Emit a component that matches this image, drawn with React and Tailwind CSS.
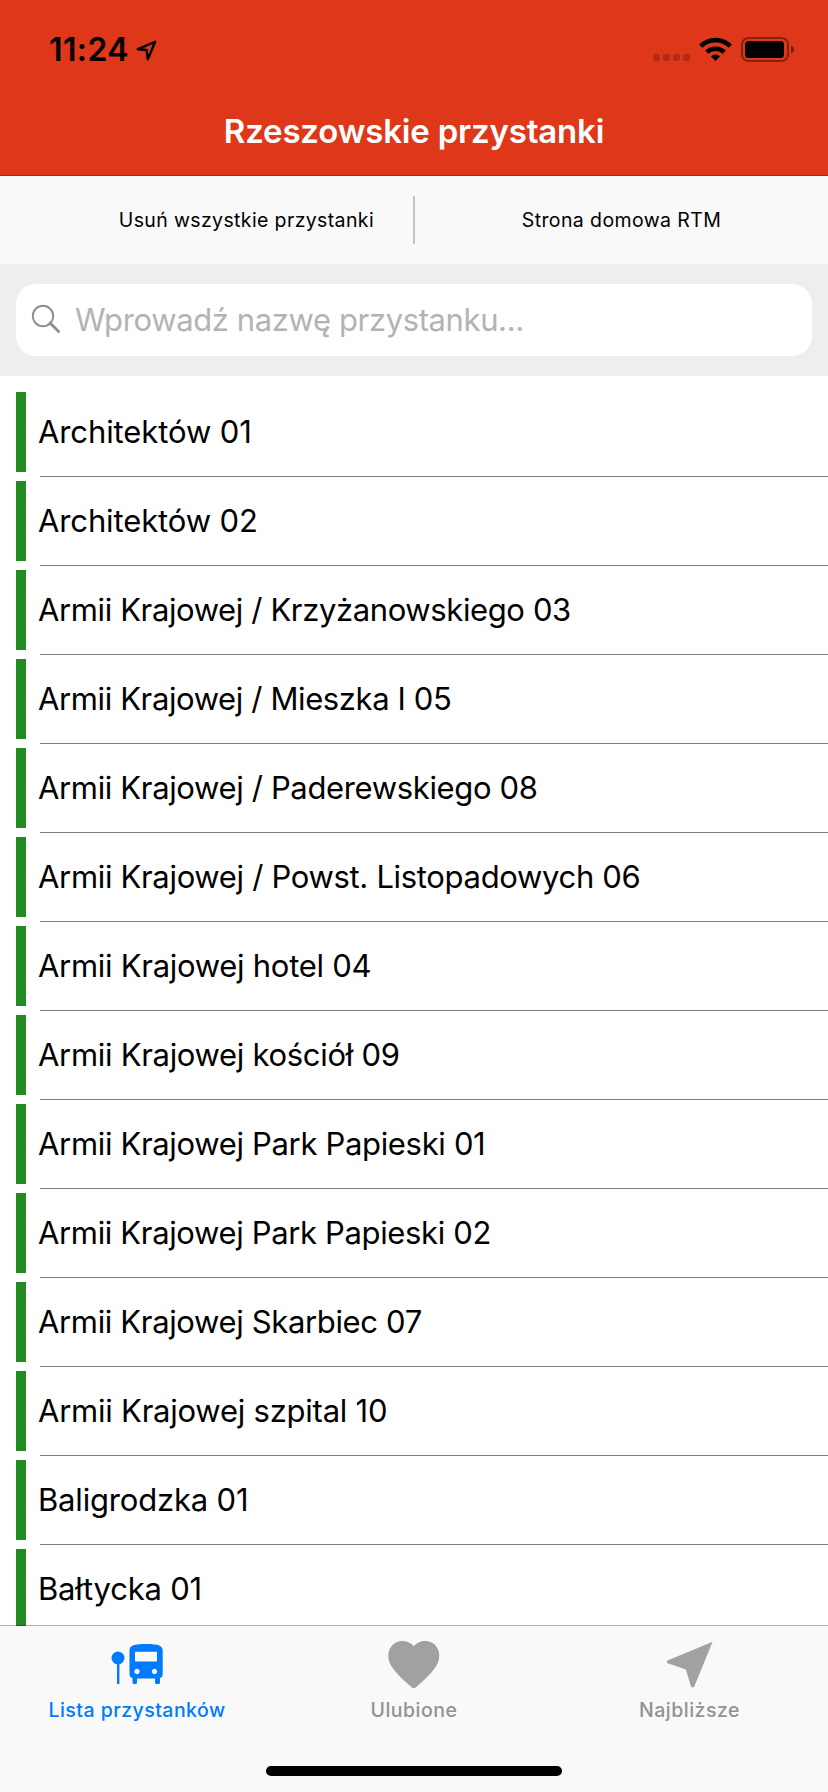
const stops = [
  { name: "Architektów 01", tracking: "tracking-[-0.1px]" },
  { name: "Architektów 02", tracking: "tracking-[-0.12px]" },
  { name: "Armii Krajowej / Krzyżanowskiego 03", tracking: "tracking-[-0.38px]" },
  { name: "Armii Krajowej / Mieszka I 05", tracking: "tracking-[-0.38px]" },
  { name: "Armii Krajowej / Paderewskiego 08", tracking: "tracking-[-0.35px]" },
  { name: "Armii Krajowej / Powst. Listopadowych 06", tracking: "tracking-[-0.32px]" },
  { name: "Armii Krajowej hotel 04", tracking: "tracking-[-0.28px]" },
  { name: "Armii Krajowej kościół 09", tracking: "tracking-[-0.3px]" },
  { name: "Armii Krajowej Park Papieski 01", tracking: "tracking-[-0.33px]" },
  { name: "Armii Krajowej Park Papieski 02", tracking: "tracking-[-0.35px]" },
  { name: "Armii Krajowej Skarbiec 07", tracking: "tracking-[-0.35px]" },
  { name: "Armii Krajowej szpital 10", tracking: "tracking-[-0.23px]" },
  { name: "Baligrodzka 01", tracking: "tracking-[-0.18px]" },
  { name: "Bałtycka 01", tracking: "tracking-[-0.2px]" },
];

function LocationIcon() {
  return (
    <svg className="h-[24px] w-[24px]" viewBox="0 0 24 24" fill="none" stroke="#000" strokeWidth="2.4" strokeLinejoin="round">
      <path d="M20.2 3.8 2.8 11.2 11.6 12 12.8 21.2Z" />
    </svg>
  );
}

function SignalDots() {
  return (
    <div className="mt-[17px] flex gap-[3px]">
      {[0, 1, 2, 3].map((i) => (
        <span key={i} className="size-[7px] rounded-[2px] bg-black/20" />
      ))}
    </div>
  );
}

function WifiIcon() {
  return (
    <svg className="ml-[9px] h-[25px] w-[33px]" viewBox="0 0 33 25" fill="none" stroke="#000" strokeWidth="4.6">
      <path d="M1.7 9.1A21.4 21.4 0 0 1 31.3 9.1" />
      <path d="M7.7 15.2A12.8 12.8 0 0 1 25.3 15.2" />
      <path d="M16.5 24 12 19.4A6.4 6.4 0 0 1 21 19.4Z" fill="#000" stroke="none" />
    </svg>
  );
}

function BatteryIcon() {
  return (
    <svg className="ml-[9px] h-[25px] w-[53px]" viewBox="0 0 53 25">
      <rect x="1" y="1" width="46" height="23" rx="6.5" fill="none" stroke="#000" strokeOpacity="0.4" strokeWidth="2" />
      <rect x="4" y="4" width="39" height="17" rx="3.5" />
      <path d="M50 8.5C52 9 53 10.6 53 12.5S52 16 50 16.5Z" fillOpacity="0.45" />
    </svg>
  );
}

function SearchIcon() {
  return (
    <svg className="ml-[14px] h-[32px] w-[32px]" viewBox="0 0 32 32" fill="none" stroke="#8e8e93">
      <circle cx="13" cy="12" r="10.2" strokeWidth="1.9" />
      <path d="M20 19 28.6 27.6" strokeWidth="2.8" strokeLinecap="round" />
    </svg>
  );
}

function BusStopIcon() {
  return (
    <svg className="h-[50px] w-[60px]" viewBox="107 1640 60 50" fill="#007aff">
      <circle cx="118" cy="1658" r="6.5" />
      <rect x="117" y="1663" width="2.4" height="21" />
      <path
        fillRule="evenodd"
        d="M129.500 1650.500C129.500 1646 133 1644 146 1644S162.700 1646 162.700 1650.500V1673.500Q162.700 1677.500 160 1678V1682.500Q160 1684 158.500 1684H156.500Q155 1684 155 1682.500V1678.500H137V1682.500Q137 1684 135.500 1684H134Q132.500 1684 132.500 1682.500V1678Q129.500 1677.500 129.500 1673.500ZM135 1651.700V1661.500H157V1651.700ZM137 1668.800A2.700 2.700 0 1 0 137.010 1668.800ZM154.500 1668.800A2.700 2.700 0 1 0 154.510 1668.800Z"
      />
    </svg>
  );
}

function HeartIcon() {
  return (
    <svg className="h-[50px] w-[60px]" viewBox="383 1640 60 50" fill="#a1a1a1">
      <path d="M412.800 1646.300C415.500 1643 419.500 1641 423.800 1641C432 1641 438.300 1647 438.300 1655.500C438.300 1665.500 431 1673 415 1687.200Q412.800 1689 410.600 1687.200C394.500 1673 387.300 1665.500 387.300 1655.500C387.300 1647 393.600 1641 401.800 1641C406 1641 410 1643 412.800 1646.300Z" />
    </svg>
  );
}

function ArrowIcon() {
  return (
    <svg className="h-[50px] w-[60px]" viewBox="656 1640 60 50" fill="#a1a1a1">
      <path d="M708.600 1641.700 690 1687.300H687.300L681.800 1669.500 663 1662.900V1660.700Z" />
    </svg>
  );
}

const tabs = [
  { label: "Lista przystanków", Icon: BusStopIcon, box: "w-[274px]", tone: "text-[#007aff] tracking-[0.46px]" },
  { label: "Ulubione", Icon: HeartIcon, box: "w-[280px]", tone: "text-[#929292] tracking-[0.5px]" },
  { label: "Najbliższe", Icon: ArrowIcon, box: "w-[271px]", tone: "text-[#929292] tracking-[0.5px]" },
];

export default function App() {
  return (
    <div className="flex h-[1792px] w-[828px] flex-col overflow-hidden bg-white font-[Inter,sans-serif] text-black">
      <header className="flex h-[176px] shrink-0 flex-col border-b border-[#a42711] bg-[#de3719]">
        <div className="flex h-[88px] items-start justify-between pr-[34px] pl-[49px] pt-[37px]">
          <div className="flex items-center">
            <span className="w-[86px] text-[32px] leading-[25px] font-semibold tracking-[0.4px]">11:24</span>
            <LocationIcon />
          </div>
          <div className="flex items-start">
            <SignalDots />
            <WifiIcon />
            <BatteryIcon />
          </div>
        </div>
        <h1 className="text-center text-[33px] leading-[88px] font-semibold tracking-[-0.18px] text-white">
          Rzeszowskie przystanki
        </h1>
      </header>

      <div className="flex h-[88px] shrink-0 items-center bg-[#f9f9f9] text-[19.5px]">
        <button className="flex h-full w-[413px] items-center justify-end pt-px pr-[39px] tracking-[0.37px]">
          Usuń wszystkie przystanki
        </button>
        <span className="h-[48px] w-[2px] bg-[#c4c4c4]" />
        <button className="flex h-full w-[413px] items-center justify-center pt-px tracking-[0.4px]">
          Strona domowa RTM
        </button>
      </div>

      <div className="h-[112px] shrink-0 bg-[#eeeeee] px-[16px] py-[20px]">
        <div className="flex h-[72px] items-center rounded-[20px] bg-white">
          <SearchIcon />
          <span className="ml-[13px] text-[31px] tracking-[-0.38px] text-[#b3b3b3]">Wprowadź nazwę przystanku...</span>
        </div>
      </div>

      <ul className="flex min-h-0 flex-1 flex-col overflow-hidden pt-[12px]">
        {stops.map((stop) => (
          <li key={stop.name} className="flex h-[89px] shrink-0 pl-[16px]">
            <span className="mt-[4px] h-[80px] w-[10px] bg-[#228b22]" />
            <div className="ml-[14px] flex flex-1 items-center border-b border-[#808080]">
              <span className={`-ml-[2px] text-[31px] whitespace-nowrap ${stop.tracking}`}>{stop.name}</span>
            </div>
          </li>
        ))}
      </ul>

      <nav className="-mt-px flex h-[167px] shrink-0 flex-col items-center border-t border-black/30 bg-[#f9f9f9] bg-clip-padding">
        <div className="flex w-full pt-[14px]">
          {tabs.map(({ label, Icon, box, tone }) => (
            <div key={label} className={`flex flex-col items-center ${box}`}>
              <Icon />
              <span className={`mt-[8px] text-[19.5px] leading-[24px] font-medium ${tone}`}>{label}</span>
            </div>
          ))}
        </div>
        <div className="mt-auto mb-[16px] h-[10px] w-[296px] rounded-full bg-black" />
      </nav>
    </div>
  );
}
